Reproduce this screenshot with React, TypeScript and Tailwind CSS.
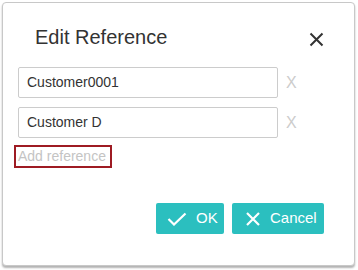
import React from 'react';

export default function App() {
  return (
    <div className="w-[358px] h-[270px] bg-white font-['Liberation_Sans'] text-[#333]">
      <div className="ml-[2px] mt-[2px] w-[353px] h-[264px] bg-white border border-[#c8c8c8] rounded-[4px] shadow-[0_2px_2px_rgba(0,0,0,0.3)] flex flex-col">
        {/* Header */}
        <div className="flex items-start justify-between pl-[32px] pr-[30px] pt-[24px] h-[62px]">
          <h1 className="text-[20px] text-[#333] leading-none">Edit Reference</h1>
          <svg width="15" height="15" viewBox="0 0 15 15" className="mt-[5px]">
            <path d="M1.5 1.5 L13.5 13.5 M13.5 1.5 L1.5 13.5" stroke="#333" strokeWidth="2" />
          </svg>
        </div>

        {/* Body */}
        <div className="flex flex-col pl-[15px] pt-[2px]">
          {['Customer0001', 'Customer D'].map((v) => (
            <div key={v} className="flex items-center mb-[9px]">
              <div className="w-[260px] h-[31px] border border-[#ccc] rounded-[2px] flex items-center pl-[8px] text-[14px] text-[#333]">
                {v}
              </div>
              <span className="ml-[8px] text-[16px] text-[#ccc]">X</span>
            </div>
          ))}
          <div className="-mt-[2px] -ml-[4px] w-[98px] h-[23px] border-2 border-[#9e1b23] flex items-center pl-[2px] text-[14px] text-[#c4c4c4]">
            Add reference
          </div>
        </div>

        {/* Footer */}
        <div className="flex justify-end gap-[8px] pr-[30px] mt-[35px]">
          <button className="h-[31px] w-[68px] bg-[#2bbfbf] rounded-[2px] flex items-center pl-[11px] gap-[9px] text-white text-[15px]">
            <svg width="20" height="14" viewBox="0 0 20 14">
              <path d="M1.5 7 L7 12.5 L18.5 1.5" stroke="white" strokeWidth="2.2" fill="none" />
            </svg>
            OK
          </button>
          <button className="h-[31px] w-[92px] bg-[#2bbfbf] rounded-[2px] flex items-center pl-[14px] gap-[10px] text-white text-[15px]">
            <svg width="14" height="14" viewBox="0 0 14 14">
              <path d="M1 1 L13 13 M13 1 L1 13" stroke="white" strokeWidth="2.2" />
            </svg>
            Cancel
          </button>
        </div>
      </div>
    </div>
  );
}
